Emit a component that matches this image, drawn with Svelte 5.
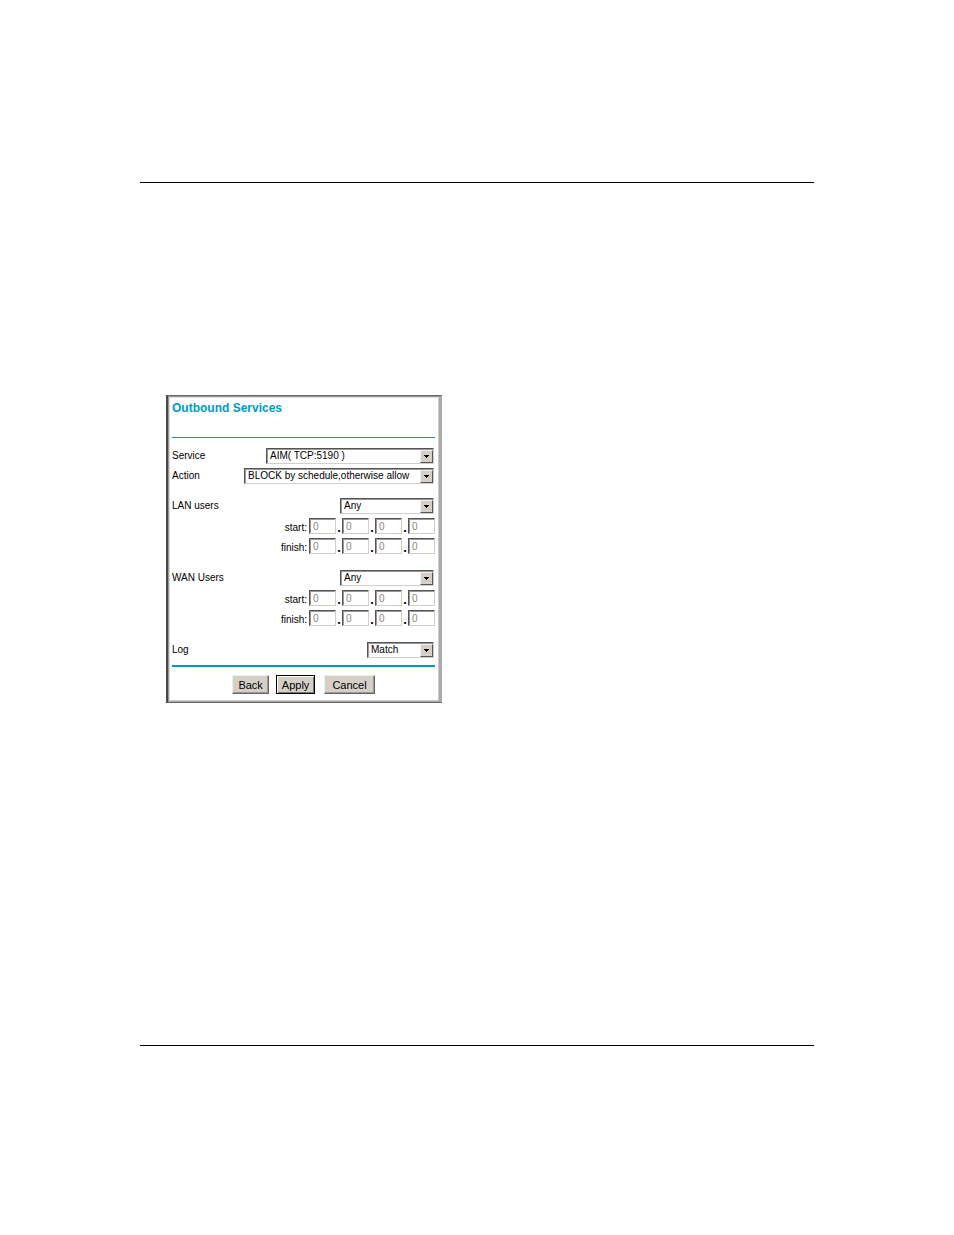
<script>
  let service = $state('AIM( TCP:5190 )');
  let action = $state('BLOCK by schedule,otherwise allow');
  let log = $state('Match');
  let groups = $state([
    { id: 'lan', label: 'LAN users', value: 'Any', start: [0, 0, 0, 0], finish: [0, 0, 0, 0] },
    { id: 'wan', label: 'WAN Users', value: 'Any', start: [0, 0, 0, 0], finish: [0, 0, 0, 0] }
  ]);
  const ends = ['start', 'finish'];
</script>

{#snippet arrow()}
  <span class="arrow" aria-hidden="true">
    <svg width="5" height="3" viewBox="0 0 5 3"><path d="M0 0h5v1h-1v1h-1v1h-1v-1h-1v-1h-1z" /></svg>
  </span>
{/snippet}

<main>
  <form class="panel" onsubmit={(e) => e.preventDefault()}>
    <h1>Outbound Services</h1>

    <div class="group">
      <div class="row">
        <label for="service">Service</label>
        <span class="select large">
          <select id="service" bind:value={service}>
            <option>AIM( TCP:5190 )</option>
          </select>
          {@render arrow()}
        </span>
      </div>
      <div class="row">
        <label for="action">Action</label>
        <span class="select full">
          <select id="action" bind:value={action}>
            <option>BLOCK by schedule,otherwise allow</option>
          </select>
          {@render arrow()}
        </span>
      </div>
    </div>

    {#each groups as group}
      <div class="group">
        <div class="row">
          <label for={group.id}>{group.label}</label>
          <span class="select medium">
            <select id={group.id} bind:value={group.value}>
              <option>Any</option>
            </select>
            {@render arrow()}
          </span>
        </div>
        {#each ends as end}
          <div class="row address">
            <label for="{group.id}-{end}-0">{end}:</label>
            {#each group[end] as octet, i}
              {#if i > 0}<b class="dot">.</b>{/if}
              <input id="{group.id}-{end}-{i}" aria-label="{group.label} {end} {i + 1}" type="text" maxlength="3" value={octet} disabled />
            {/each}
          </div>
        {/each}
      </div>
    {/each}

    <div class="row">
      <label for="log">Log</label>
      <span class="select small">
        <select id="log" bind:value={log}>
          <option>Match</option>
        </select>
        {@render arrow()}
      </span>
    </div>

    <div class="buttons">
      <button type="button">Back</button>
      <button type="submit" class="default">Apply</button>
      <button type="button" class="cancel">Cancel</button>
    </div>
  </form>
</main>

<style>
:global(body) {
  background: #fff;
}
main {
  margin: 182px 140px;
  padding: 212px 26px 342px;
  border-top: 1px solid #000;
  border-bottom: 1px solid #000;
}
.panel {
  box-sizing: border-box;
  max-width: 276px;
  padding: 4px 6px 8px 4px;
  border: 1px solid;
  border-color: #666 #aaa #666 #484848;
  border-left-width: 2px;
  box-shadow: inset 1px 1px #999, inset -2px -1px #aaa, inset 2px 2px #ddd, inset -3px -2px #ccc;
  font-family: "Liberation Sans", Arial, sans-serif;
  font-size: 10px;
  line-height: 12px;
  color: #000;
}
h1 {
  margin: 0 0 8px;
  padding-bottom: 21px;
  border-bottom: 1px solid #1592c0;
  font-size: 12px;
  line-height: 16px;
  color: #0099cc;
}
.group {
  margin-bottom: 12px;
}
.group:first-of-type {
  margin-bottom: 10px;
}
.row {
  display: flex;
  align-items: center;
  justify-content: space-between;
  height: 20px;
}
.address {
  justify-content: flex-end;
}
.address label {
  margin-right: 2px;
  padding-top: 4px;
}
.dot {
  width: 6px;
  padding-top: 4px;
  font-size: 13px;
  text-align: center;
}
.select {
  position: relative;
  margin-right: 1px;
}
.full {
  width: 190px;
}
.large {
  width: 168px;
}
.medium {
  width: 94px;
}
.small {
  width: 67px;
}
select,
input {
  display: block;
  box-sizing: border-box;
  height: 16px;
  margin: 0;
  border: 1px solid;
  border-color: #555 #d4d0c8 #d4d0c8 #555;
  border-radius: 0;
  background: #fff;
  box-shadow: inset 1px 1px #999;
  font: inherit;
}
select {
  width: 100%;
  padding: 0 14px 0 3px;
  appearance: none;
  color: #000;
}
input {
  width: 27px;
  padding: 0 3px;
}
input:disabled {
  color: #888;
}
.arrow {
  position: absolute;
  top: 2px;
  right: 1px;
  bottom: 1px;
  display: flex;
  align-items: center;
  justify-content: center;
  box-sizing: border-box;
  width: 13px;
  border: 1px solid;
  border-color: #eee #555 #555 #eee;
  background: #d4d0c8;
  pointer-events: none;
}
.buttons {
  display: flex;
  justify-content: center;
  gap: 7px;
  margin-top: 5px;
  padding: 8px 0 0;
  border-top: 2px solid #0099cc;
}
button {
  box-sizing: border-box;
  height: 19px;
  padding: 0 5px;
  border: 1px solid;
  border-color: #eee #666 #666 #eee;
  border-radius: 0;
  background: #d4d0c8;
  box-shadow: inset -1px -1px #999;
  font: inherit;
  font-size: 11px;
  color: #000;
}
.default {
  border-color: #000;
  box-shadow: inset 1px 1px #fff, inset -1px -1px #777;
}
.cancel {
  margin-left: 2px;
  padding: 0 7px;
}
</style>
